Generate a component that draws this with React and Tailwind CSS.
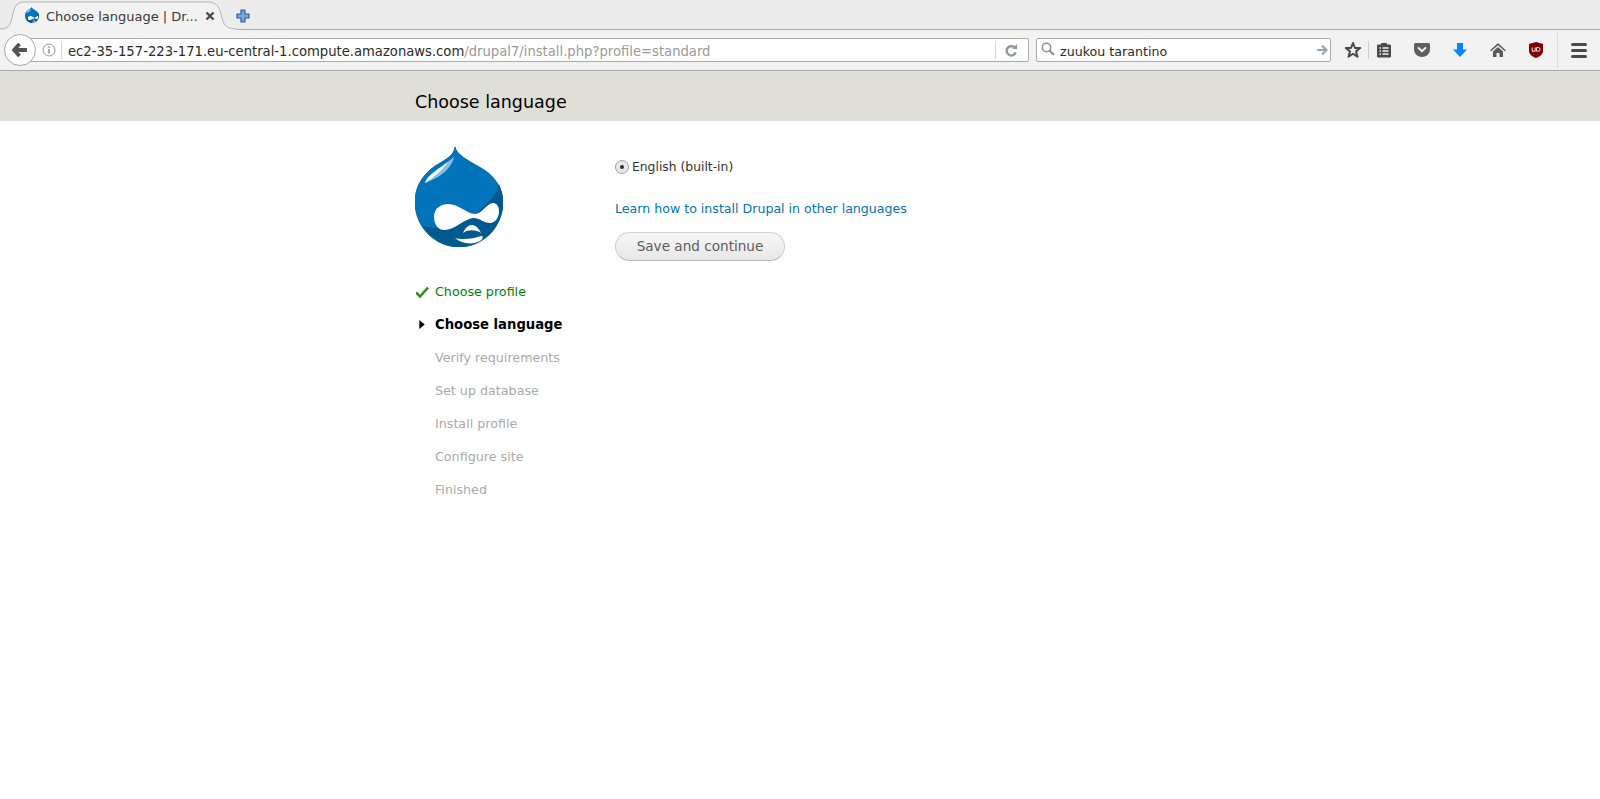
import React from "react";

const DropIcon = ({ className }) => (
  <svg viewBox="0 0 88 100" className={className}>
    <path
      d="M40 0C41 7 52 13 66 21C79 28 88 41 88 55C88 80 68 100 44 100C20 100 0 80 0 55C0 38 9 27 20 19C32 12 39 8 40 0Z"
      fill="#0073ba"
      stroke="#00598e"
      strokeWidth="0.8"
    />
    <path
      d="M84 37C82 45 78 52 70 58L60 68L28 82L8 79C16 92 30 100 44 100C68 100 88 80 88 55C88 48 86 42 84 37Z"
      fill="#00598e"
    />
    <path d="M10 36C12 28 24 22 39 10C37 20 28 28 17 33C13 35 11 36 10 36Z" fill="#8bbde0" />
    <path d="M10 36C12 28 24 22 33 15C27 24 18 31 10 36Z" fill="#f2f7fb" />
    <path
      d="M19 70C19 62 25 57 33 57C44 57 52 67 60 67C67 67 72 56 78 56C82 56 84 60 84 64C84 71 80 76 75 76C69 76 64 71 59 71C50 71 40 83 29 83C23 83 19 77 19 70Z"
      fill="#ffffff"
    />
    <path d="M48 86C50 81 53 78 57 78C61 78 64 82 66 86C62 83 53 82 48 86Z" fill="#ffffff" />
    <path d="M40 91C47 93 58 92 66 89C69 89 68 92 65 94C58 98 46 97 40 91Z" fill="#ffffff" />
  </svg>
);

const ToolbarIcons = () => (
  <div className="flex items-center h-full">
    {/* star */}
    <svg viewBox="0 0 18 18" className="w-[18px] h-[18px] ml-[13px]">
      <path d="M9 2L11 7H16.2L12 10.4L13.5 15.8L9 12.7L4.5 15.8L6 10.4L1.8 7H7Z" fill="none" stroke="#4a4a4a" strokeWidth="2" strokeLinejoin="round" />
    </svg>
    <div className="w-px h-[18px] bg-[#cfcfcf] ml-[6px]" />
    {/* reading list */}
    <svg viewBox="0 0 16 16" className="w-[16px] h-[16px] ml-[7px]">
      <path d="M1.5 3H5.5V1.5H10.5V3H14.5V15H1.5Z" fill="#4a4a4a" stroke="#4a4a4a" strokeLinejoin="round" />
      <path d="M3.5 6H5M3.5 9H5M3.5 12H5M6.5 6H12.5M6.5 9H12.5M6.5 12H12.5" stroke="#f2f2f2" strokeWidth="1.3" />
    </svg>
    {/* pocket */}
    <svg viewBox="0 0 16 14" className="w-[16px] h-[14px] ml-[22px]">
      <path d="M1.5 0H14.5Q16 0 16 1.5V6.5C16 11 12 14 8 14C4 14 0 11 0 6.5V1.5Q0 0 1.5 0Z" fill="#5e5e5e" />
      <path d="M4.6 5L8 8.2L11.4 5" fill="none" stroke="#f2f2f2" strokeWidth="2" strokeLinecap="round" />
    </svg>
    {/* download */}
    <svg viewBox="0 0 14 14" className="w-[14px] h-[14px] ml-[23px]">
      <path d="M4 0H10V6.5H14L7 14L0 6.5H4Z" fill="#0a84ff" />
    </svg>
    {/* home */}
    <svg viewBox="0 0 16 14" className="w-[16px] h-[14px] ml-[23px]">
      <path d="M8 0L16 7.5L14.8 8.2L8 2.2L1.2 8.2L0 7.5Z" fill="#5a5a5a" />
      <path d="M3 8.5L8 4L13 8.5V14H9.5V10H6.5V14H3Z" fill="#5a5a5a" />
    </svg>
    {/* ublock */}
    <svg viewBox="0 0 14 16" className="w-[14px] h-[16px] ml-[23px]">
      <path d="M7 0L14 2V9C14 12.5 10 15 7 16C4 15 0 12.5 0 9V2Z" fill="#800000" />
      <path d="M3.2 5.5V9.2H6.2V5.5M7.6 5.5V9.2H9.5Q11 9.2 11 7.35Q11 5.5 9.5 5.5H7.6" fill="none" stroke="#ffffff" strokeWidth="0.9" />
    </svg>
    <div className="w-px h-[35px] bg-[#dcdcdc] ml-[14px]" />
    {/* menu */}
    <div className="flex flex-col gap-[3px] ml-[13px]">
      <div className="w-[16px] h-[3px] bg-[#4a4a4a] rounded-sm" />
      <div className="w-[16px] h-[3px] bg-[#4a4a4a] rounded-sm" />
      <div className="w-[16px] h-[3px] bg-[#4a4a4a] rounded-sm" />
    </div>
  </div>
);

const steps = [
  { label: "Choose profile", state: "done" },
  { label: "Choose language", state: "active" },
  { label: "Verify requirements" },
  { label: "Set up database" },
  { label: "Install profile" },
  { label: "Configure site" },
  { label: "Finished" },
];

const App = () => {
  return (
    <div className="w-[1600px] h-[799px] bg-white overflow-hidden font-['DejaVu_Sans',sans-serif]">
      {/* tab strip */}
      <div className="h-[30px] bg-[#ececec] border-b border-[#a9a9a9] flex items-start relative">
        <div className="relative w-[240px] h-[30px] flex items-center pl-[25px] shrink-0">
          <svg viewBox="0 0 240 30" className="absolute left-0 top-0 w-[240px] h-[30px]">
            <path d="M0 29C8 29 10 26 12 18C14 8 16 2 24 2H208C217 2 220 8 222 18C224 26 227 29 238 29V30H0Z" fill="#f2f2f2" />
            <path d="M0 29C8 29 10 26 12 18C14 8 16 2 24 2H208C217 2 220 8 222 18C224 26 227 29 238 29" fill="none" stroke="#b4b4b4" />
          </svg>
          <DropIcon className="relative w-[14px] h-[16px]" />
          <span className="relative ml-[7px] pt-[3px] text-[13px] text-[#3a3a3a] whitespace-nowrap">Choose language | Dr...</span>
          <svg viewBox="0 0 10 10" className="absolute left-[205px] top-[11px] w-[10px] h-[10px]">
            <path d="M1.5 1.5L8.5 8.5M8.5 1.5L1.5 8.5" stroke="#4a4a4a" strokeWidth="2.4" />
          </svg>
        </div>
        <svg viewBox="0 0 14 14" className="w-[14px] h-[14px] mt-[9px] -ml-[4px] relative">
          <path d="M5 1H9V5H13V9H9V13H5V9H1V5H5Z" fill="#7aa5d8" stroke="#2f5c9c" strokeWidth="1.2" strokeLinejoin="round" />
        </svg>
      </div>

      {/* nav bar */}
      <div className="h-[41px] bg-[#f2f2f2] border-b border-[#a9a9a9] flex items-center pl-[4px]">
        <div className="relative z-10 w-[32px] h-[32px] rounded-full bg-white border border-[#a9a9a9] flex items-center justify-center shrink-0">
          <svg viewBox="0 0 16 14" className="w-[16px] h-[14px]">
            <path d="M7.5 1L2 7L7.5 13M2.5 7H15" fill="none" stroke="#555555" strokeWidth="3.8" strokeLinejoin="round" />
          </svg>
        </div>
        <div className="-ml-[6px] w-[999px] h-[24px] bg-white border border-[#ababab] rounded-r-[2px] flex items-center shrink-0 pl-[11px]">
          <svg viewBox="0 0 14 14" className="w-[14px] h-[14px] shrink-0">
            <circle cx="7" cy="7" r="6" fill="none" stroke="#9a9a9a" />
            <path d="M7 6V10.5M7 3.2V4.8" stroke="#8a8a8a" strokeWidth="1.4" />
          </svg>
          <div className="w-px h-[17px] bg-[#d4d4d4] ml-[5px]" />
          <div className="ml-[6px] pt-[3px] flex-1 text-[13.18px] leading-none whitespace-nowrap text-[#2a2a2a]">
            ec2-35-157-223-171.eu-central-1.compute.amazonaws.com<span className="text-[#999999]">/drupal7/install.php?profile=standard</span>
          </div>
          <div className="w-px h-[17px] bg-[#d4d4d4]" />
          <svg viewBox="0 0 14 14" className="w-[13px] h-[13px] ml-[9px] mr-[10px]">
            <path d="M11.5 9A5 5 0 1 1 10 3.5" fill="none" stroke="#8c98a5" strokeWidth="2.6" />
            <path d="M7.5 5.5H13V0Z" fill="#8c98a5" />
          </svg>
        </div>
        <div className="ml-[7px] w-[295px] h-[24px] bg-white border border-[#ababab] rounded-[2px] flex items-center shrink-0 pl-[4px] pr-[1px]">
          <svg viewBox="0 0 14 14" className="w-[14px] h-[14px] shrink-0 -mt-[2px]">
            <circle cx="5.5" cy="5.5" r="4.2" fill="none" stroke="#8f8f8f" strokeWidth="1.5" />
            <path d="M8.5 8.5L13 13" stroke="#8f8f8f" strokeWidth="2.2" />
          </svg>
          <div className="ml-[5px] pt-[4px] flex-1 text-[12.65px] leading-none text-[#2a2a2a] whitespace-nowrap">zuukou tarantino</div>
          <svg viewBox="0 0 12 12" className="w-[12px] h-[12px] mr-[1px]">
            <path d="M1 6H10.5M6 1.5L10.5 6L6 10.5" fill="none" stroke="#98a4b2" strokeWidth="2.2" />
          </svg>
        </div>
        <ToolbarIcons />
      </div>

      {/* page title */}
      <div className="h-[50px] bg-[#dfdfd8] pl-[415px] pt-[20px]">
        <h1 className="text-[17.5px] leading-[22px] font-normal text-black">Choose language</h1>
      </div>

      {/* page body */}
      <div className="pl-[415px] flex">
        <div className="w-[200px] shrink-0 pt-[26px]">
          <DropIcon className="w-[88px] h-[100px]" />
          <ul className="mt-[28px] text-[12.7px]">
            {steps.map((step) => (
              <li key={step.label} className="h-[33px] flex items-center">
                <span className="w-[20px] flex items-center shrink-0">
                  {step.state === "done" && (
                    <svg viewBox="0 0 14 12" className="w-[14px] h-[12px] ml-[1px]">
                      <path d="M0 6.5L4 10.5L12 1.5" fill="none" stroke="#3c8a1e" strokeWidth="2.6" />
                    </svg>
                  )}
                  {step.state === "active" && (
                    <svg viewBox="0 0 6 10" className="w-[6px] h-[9px] ml-[4px]">
                      <path d="M0 0L6 5L0 10Z" fill="#000000" />
                    </svg>
                  )}
                </span>
                <span
                  className={
                    "mt-[1px] " +
                    (step.state === "done"
                      ? "text-[#008000]"
                      : step.state === "active"
                        ? "font-bold text-[13.2px] text-black"
                        : "text-[#aaaaaa]")
                  }
                >
                  {step.label}
                </span>
              </li>
            ))}
          </ul>
        </div>
        <div className="pt-[38px] text-[12.6px]">
          <div className="flex items-center h-[16px] text-[#333]">
            <span className="w-[14px] h-[14px] rounded-full border border-[#a0a0a0] bg-[#e8e8e8] flex items-center justify-center shrink-0">
              <span className="w-[4px] h-[4px] rounded-full bg-[#2e2e2e]" />
            </span>
            <span className="ml-[3px] text-[12.35px]">English (built-in)</span>
          </div>
          <a href="#" className="block mt-[26px] leading-[16px] text-[#0074bd]">
            Learn how to install Drupal in other languages
          </a>
          <button className="mt-[15px] w-[170px] h-[29px] rounded-[20px] border border-[#d0d0d0] border-b-[#b8b8b8] bg-gradient-to-b from-[#f6f6f6] to-[#e8e8e8] text-[13.6px] text-[#5c5c5c] font-['DejaVu_Sans',sans-serif]">
            Save and continue
          </button>
        </div>
      </div>
    </div>
  );
};

export default App;
